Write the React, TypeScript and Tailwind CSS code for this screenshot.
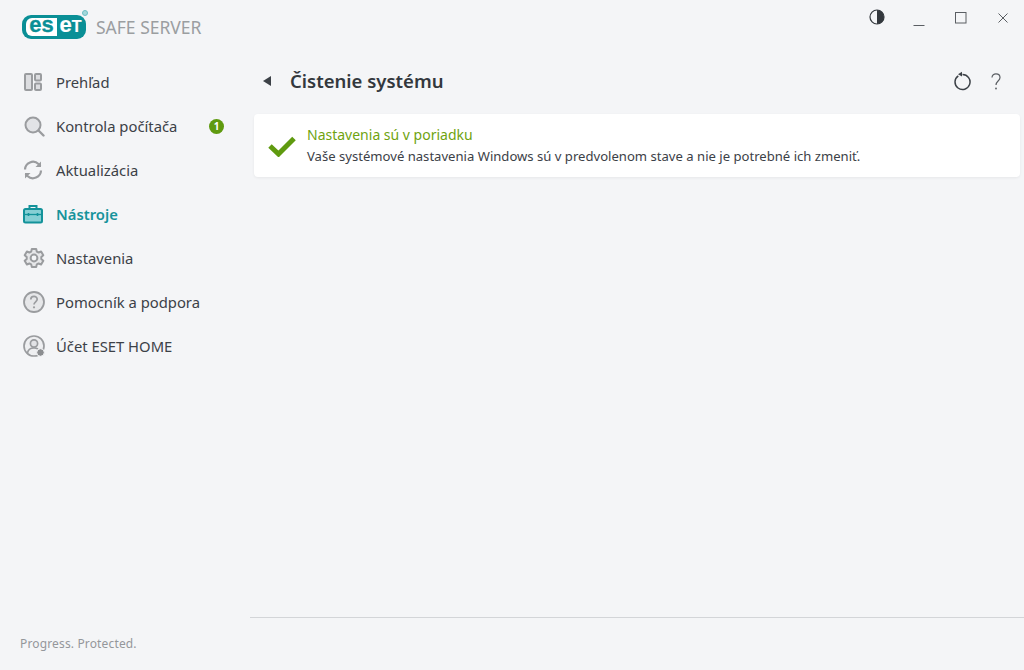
// App.tsx
import React from "react";

const font = { fontFamily: '"Noto Sans", "Open Sans", sans-serif' };

function Logo() {
  return (
    <div className="relative flex h-[24px] w-[64px] items-center rounded-[9px] bg-[#0a8f96] pl-[4px] pr-[2px]">
      <div className="flex h-[18px] w-[31px] items-center justify-center rounded-l-[6px] bg-white text-[22px] font-bold leading-none text-[#0a8f96] [-webkit-text-stroke:0.3px_#0a8f96] [font-family:'Liberation_Sans',sans-serif]">
        <span className="-mt-[4px]">es</span>
      </div>
      <div className="flex flex-1 items-center justify-center text-[22px] font-bold leading-none text-white [-webkit-text-stroke:0.2px_#ffffff] [font-family:'Liberation_Sans',sans-serif]">
        <span className="-mt-[4px]">e</span>
        <span className="-mt-[1px] text-[16px]">T</span>
      </div>
      <span className="absolute -right-[2px] -top-[5px] h-[6px] w-[6px] rounded-full border border-[#6cbfc4] bg-[#a5d8db]" />
    </div>
  );
}

const gray = "#9a9c9f";

const IconOverview = () => (
  <svg width="20" height="20" viewBox="0 0 20 20" fill="#dcdde0" stroke={gray} strokeWidth="2">
    <rect x="2" y="2" width="7" height="16" rx="1" />
    <rect x="12" y="2" width="6" height="6.5" rx="1" />
    <rect x="12" y="11.5" width="6" height="6.5" rx="1" />
  </svg>
);
const IconSearch = () => (
  <svg width="22" height="22" viewBox="0 0 22 22" fill="#e2e3e6" stroke={gray} strokeWidth="2">
    <circle cx="10" cy="10" r="7.5" />
    <path d="M15.5 15.5 20.5 20.5" strokeWidth="2.4" strokeLinecap="round" />
  </svg>
);
const IconUpdate = () => (
  <svg width="20" height="20" viewBox="0 0 20 20" fill="none" stroke={gray} strokeWidth="2.2">
    <path d="M2 9.5A8 8 0 0 1 15.5 4L17.5 6" />
    <path d="M18 10.5A8 8 0 0 1 4.5 16L2.5 14" />
    <path d="M18 1.5V7H12.5" fill={gray} stroke="none" />
    <path d="M2 18.5V13H7.5" fill={gray} stroke="none" />
  </svg>
);
const IconTools = () => (
  <svg width="20" height="20" viewBox="0 0 20 20" fill="none" stroke="#13929a" strokeWidth="2">
    <rect x="1" y="5" width="18" height="13.5" rx="1.5" fill="#86cfd4" />
    <path d="M6.5 5V2h7V5" />
    <path d="M1 10.5h18" strokeWidth="1.3" />
    <path d="M5.5 9v3M14.5 9v3" strokeWidth="1.6" />
  </svg>
);
const IconGear = () => (
  <svg width="22" height="22" viewBox="0 0 22 22" fill="#e6e7e9" stroke={gray} strokeWidth="2" strokeLinejoin="round">
    <path d="M8.800 2h4.400l.6 2.600 1.800.9 2.500-1 2.200 3.800-2 1.800v1.800l2 1.800-2.200 3.800-2.500-1-1.800.9-.6 2.600H8.800l-.6-2.600-1.800-.9-2.500 1-2.200-3.800 2-1.800V10.100l-2-1.800 2.200-3.800 2.500 1 1.800-.9z" />
    <circle cx="11" cy="11" r="3.400" fill="#f4f5f7" />
  </svg>
);
const IconHelp = () => (
  <svg width="22" height="22" viewBox="0 0 22 22" fill="#e6e7e9" stroke={gray} strokeWidth="1.8">
    <circle cx="11" cy="11" r="10" />
    <path d="M7.8 8.5c0-4.2 6.4-4.2 6.4-.2 0 2.5-3.2 2.5-3.2 5.2" fill="none" strokeWidth="1.7" />
    <circle cx="11" cy="16.3" r="1.1" fill={gray} stroke="none" />
  </svg>
);
const IconAccount = () => (
  <svg width="22" height="22" viewBox="0 0 22 22" fill="none" stroke={gray} strokeWidth="1.7">
    <circle cx="11" cy="11" r="10" fill="#eeeff1" />
    <circle cx="11" cy="8.5" r="3.6" fill="#e2e3e6" />
    <path d="M4.5 18c.5-3.500 3-5 6.500-5 1.500 0 3 .3 4 1" />
    <circle cx="17.500" cy="17.500" r="3.800" fill="#8b8d90" stroke="#f4f5f7" strokeWidth="1" />
  </svg>
);

const nav = [
  { label: "Prehľad", icon: <IconOverview /> },
  { label: "Kontrola počítača", icon: <IconSearch />, badge: "1" },
  { label: "Aktualizácia", icon: <IconUpdate /> },
  { label: "Nástroje", icon: <IconTools />, active: true },
  { label: "Nastavenia", icon: <IconGear /> },
  { label: "Pomocník a podpora", icon: <IconHelp /> },
  { label: "Účet ESET HOME", icon: <IconAccount /> },
];

function Sidebar() {
  return (
    <aside className="flex h-full w-[250px] shrink-0 flex-col">
      <div className="flex h-[60px] items-start gap-[10px] pl-[22px] pt-[15px]">
        <Logo />
        <span className="text-[17.5px] leading-[24px] text-[#9b9ea1]">SAFE SERVER</span>
      </div>
      <nav className="flex flex-col">
        {nav.map((n) => (
          <div key={n.label} className="flex h-[44px] items-center pl-[23px]">
            <span className="flex w-[33px] shrink-0 items-center">{n.icon}</span>
            <span
              className={
                n.active
                  ? "w-[153px] text-[14.8px] font-semibold text-[#16939b]"
                  : "w-[153px] text-[14.8px] text-[#3c4147]"
              }
            >
              {n.label}
            </span>
            {n.badge && (
              <span className="flex h-[15px] w-[15px] items-center justify-center rounded-full bg-[#5f9a0f] text-[10px] font-bold text-white">
                {n.badge}
              </span>
            )}
          </div>
        ))}
      </nav>
      <div className="mt-auto pb-[17px] pl-[20px] text-[12px] leading-[18px] tracking-[0.15px] text-[#94979b]">
        Progress. Protected.
      </div>
    </aside>
  );
}

function TopBar() {
  return (
    <div className="flex h-[60px] items-start justify-end">
      <div className="flex items-center pr-[15px] pt-[9px]">
        <svg width="16" height="16" viewBox="0 0 16 16" className="mr-[28px] -translate-y-px">
          <circle cx="8" cy="8" r="7" fill="none" stroke="#33383d" strokeWidth="1.2" />
          <path d="M8 1a7 7 0 0 1 0 14z" fill="#33383d" />
        </svg>
        <svg width="12" height="12" viewBox="0 0 12 12" className="mr-[30px] mt-[6px]">
          <path d="M0.500 10.500H11.500" stroke="#5a5e63" strokeWidth="1" />
        </svg>
        <svg width="12" height="12" viewBox="0 0 12 12" className="mr-[30px]">
          <rect x="0.500" y="0.500" width="10.500" height="10.500" fill="none" stroke="#5a5e63" />
        </svg>
        <svg width="12" height="12" viewBox="0 0 12 12">
          <path d="M1.500 1.500 10.500 10.500M10.500 1.500 1.500 10.500" stroke="#5a5e63" strokeWidth="1" />
        </svg>
      </div>
    </div>
  );
}

function Content() {
  return (
    <main className="flex min-w-0 flex-1 flex-col">
      <TopBar />
      <div className="flex h-[44px] items-center pl-[13px] pr-[23px]">
        <svg width="9" height="10" viewBox="0 0 9 10" className="mr-[18px] -translate-y-px">
          <path d="M8 0v10L0 5z" fill="#3c4147" />
        </svg>
        <h1 className="-mt-[2px] flex-1 text-[18.5px] font-semibold text-[#33383d]">Čistenie systému</h1>
        <svg width="18" height="20" viewBox="0 0 18 20" fill="none" className="mr-[20px] -translate-y-px">
          <path d="M5.300 4.800a7.500 7.500 0 1 0 4.200-1.300" stroke="#3c4147" strokeWidth="1.500" />
          <path d="M9 0.800v4.600L5 3.300z" fill="#3c4147" />
        </svg>
        <svg width="10" height="17" viewBox="0 0 10 17" fill="none" className="-translate-y-px">
          <path d="M1 4.500C1 -0.500 9 -0.300 9 4.500 9 8 5 8 5 12" stroke="#5a5e63" strokeWidth="1.200" />
          <circle cx="5" cy="15.500" r="0.900" fill="#5a5e63" />
        </svg>
      </div>
      <div className="ml-[4px] mr-[4px] mt-[10px] flex h-[63px] items-center rounded-[4px] bg-white pl-[14px] shadow-[0_1px_3px_rgba(0,0,0,0.06)]">
        <svg width="28" height="22" viewBox="0 0 28 22" className="mr-[11px] mt-[1px]">
          <path d="M2 11 10.500 19 26 3.500" fill="none" stroke="#5f9a0f" strokeWidth="5" />
        </svg>
        <div className="flex flex-col">
          <span className="text-[14px] leading-[20px] text-[#6fa30f]">Nastavenia sú v poriadku</span>
          <span className="mt-px text-[13.1px] leading-[20px] text-[#3c4147]">
            Vaše systémové nastavenia Windows sú v predvolenom stave a nie je potrebné ich zmeniť.
          </span>
        </div>
      </div>
      <div className="mt-auto mb-[52px] h-px bg-[#d3d5d8]" />
    </main>
  );
}

export default function App() {
  return (
    <div className="flex h-[670px] w-[1024px] overflow-hidden bg-[#f4f5f7]" style={font}>
      <Sidebar />
      <Content />
    </div>
  );
}
